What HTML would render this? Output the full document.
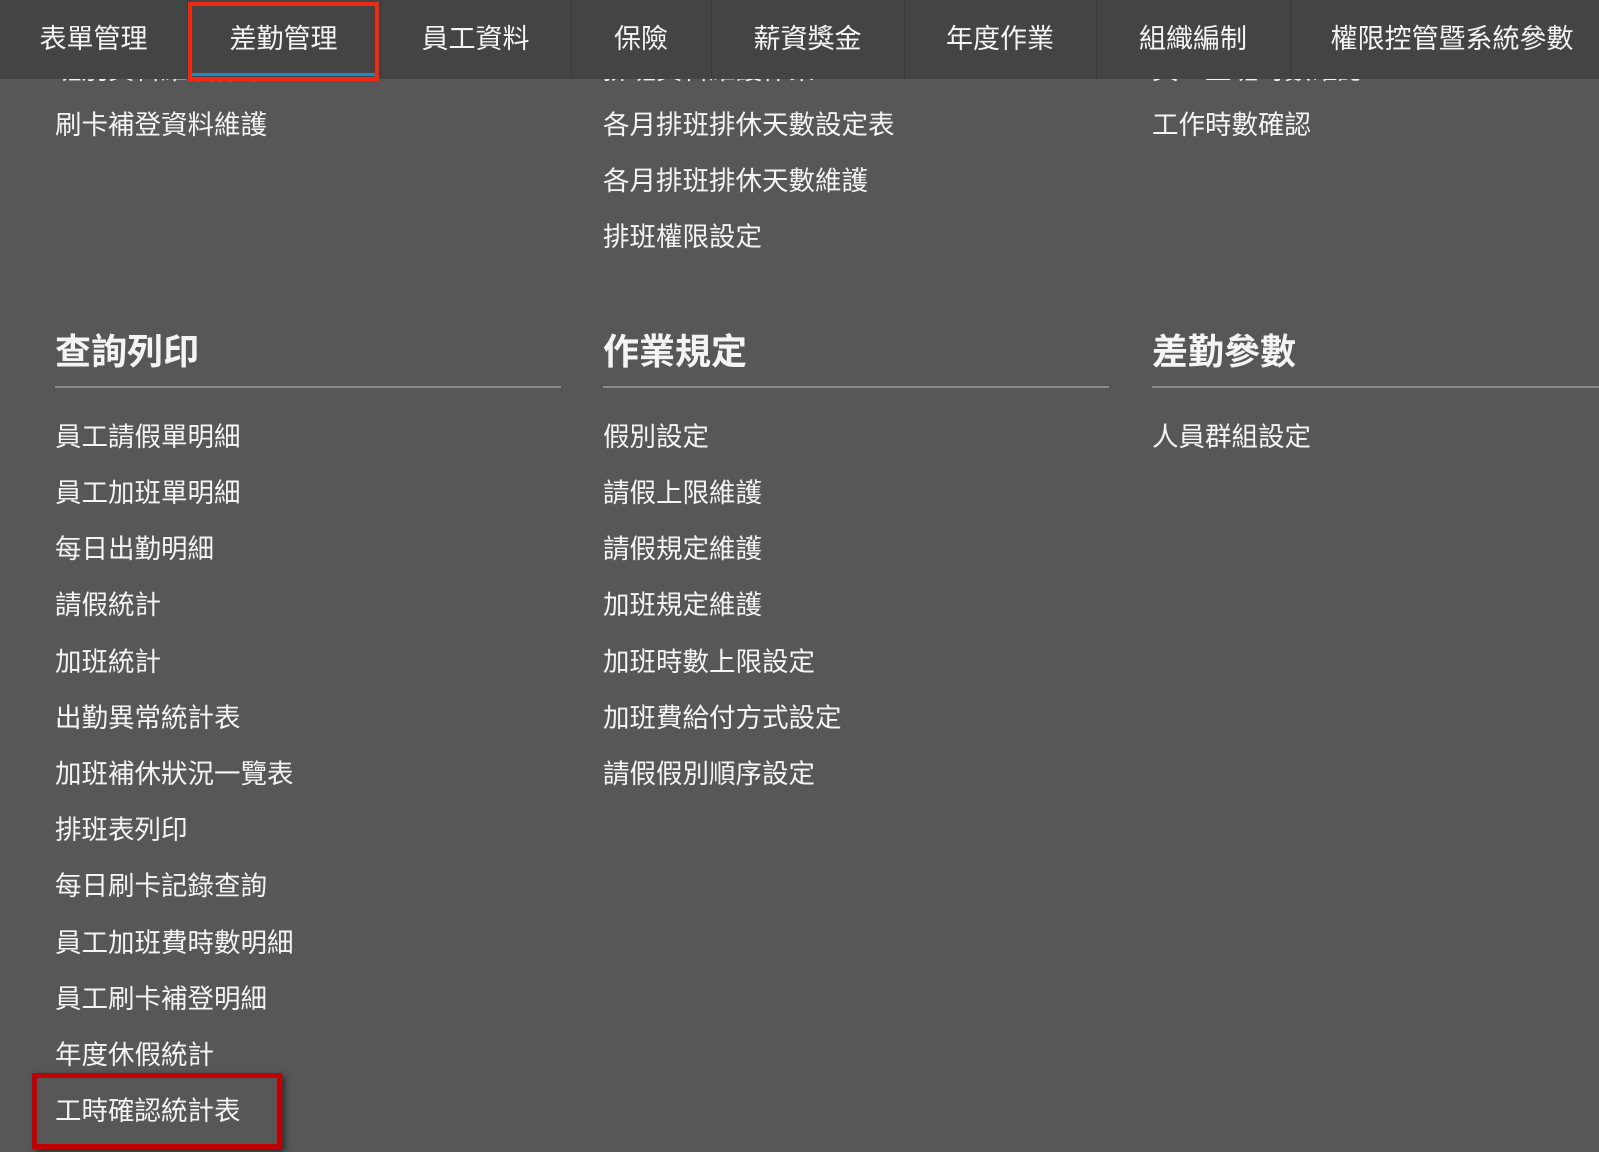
<!DOCTYPE html>
<html><head><meta charset="utf-8"><style>
body{margin:0;width:1599px;height:1152px;background:#575757;overflow:hidden;position:relative;font-family:"Liberation Sans","Noto Sans CJK TC",sans-serif;color:#fff}
.nav{position:absolute;left:0;top:0;width:1599px;height:79px;background:#444;}
.nav div{position:absolute;top:0;height:79px;line-height:78px;font-size:27px;text-align:center;border-right:1px solid #3a3a3a;color:#f4f4f4}
.t{position:absolute;font-size:26.5px;line-height:34px;white-space:nowrap;color:#f4f4f4}
.h{position:absolute;font-size:36px;font-weight:bold;line-height:40px;color:#f4f4f4}
.ln{position:absolute;height:2px;background:#8a8a8a}
</style></head><body>
<div class="t" style="left:55px;top:53px">班別資料維護作業</div>
<div class="t" style="left:603px;top:53px">排班資料維護作業</div>
<div class="t" style="left:1152px;top:53px">員工上班時數確認</div>
<div class="nav">
<div style="left:0;width:187px">表單管理</div>
<div style="left:187px;width:193px">差勤管理</div>
<div style="left:380px;width:191px">員工資料</div>
<div style="left:571px;width:140px">保險</div>
<div style="left:711px;width:193px">薪資獎金</div>
<div style="left:904px;width:192px">年度作業</div>
<div style="left:1096px;width:194px">組織編制</div>
<div style="left:1290px;width:324px;border:none">權限控管暨系統參數</div>
</div>
<div style="position:absolute;left:191px;top:73px;width:185px;height:3px;background:#1a8ac0"></div>
<div style="position:absolute;left:188px;top:2px;width:183px;height:71px;border:4px solid #f02a10"></div>

<div class="t" style="left:55px;top:108px">刷卡補登資料維護</div>
<div class="t" style="left:603px;top:108px">各月排班排休天數設定表</div>
<div class="t" style="left:603px;top:164px">各月排班排休天數維護</div>
<div class="t" style="left:603px;top:220px">排班權限設定</div>
<div class="t" style="left:1152px;top:108px">工作時數確認</div>

<div class="h" style="left:55px;top:332px">查詢列印</div>
<div class="h" style="left:603px;top:332px">作業規定</div>
<div class="h" style="left:1152px;top:332px">差勤參數</div>
<div class="ln" style="left:55px;top:386px;width:506px"></div>
<div class="ln" style="left:603px;top:386px;width:506px"></div>
<div class="ln" style="left:1152px;top:386px;width:447px"></div>

<div class="t" style="left:55px;top:420px">員工請假單明細</div>
<div class="t" style="left:55px;top:476px">員工加班單明細</div>
<div class="t" style="left:55px;top:532px">每日出勤明細</div>
<div class="t" style="left:55px;top:588px">請假統計</div>
<div class="t" style="left:55px;top:645px">加班統計</div>
<div class="t" style="left:55px;top:701px">出勤異常統計表</div>
<div class="t" style="left:55px;top:757px">加班補休狀況一覽表</div>
<div class="t" style="left:55px;top:813px">排班表列印</div>
<div class="t" style="left:55px;top:869px">每日刷卡記錄查詢</div>
<div class="t" style="left:55px;top:926px">員工加班費時數明細</div>
<div class="t" style="left:55px;top:982px">員工刷卡補登明細</div>
<div class="t" style="left:55px;top:1038px">年度休假統計</div>
<div class="t" style="left:55px;top:1094px">工時確認統計表</div>

<div class="t" style="left:603px;top:420px">假別設定</div>
<div class="t" style="left:603px;top:476px">請假上限維護</div>
<div class="t" style="left:603px;top:532px">請假規定維護</div>
<div class="t" style="left:603px;top:588px">加班規定維護</div>
<div class="t" style="left:603px;top:645px">加班時數上限設定</div>
<div class="t" style="left:603px;top:701px">加班費給付方式設定</div>
<div class="t" style="left:603px;top:757px">請假假別順序設定</div>

<div class="t" style="left:1152px;top:420px">人員群組設定</div>

<div style="position:absolute;left:32px;top:1073px;width:240px;height:66px;border:5px solid #c00000;box-shadow:3px 3px 6px rgba(0,0,0,.5)"></div>
</body></html>
